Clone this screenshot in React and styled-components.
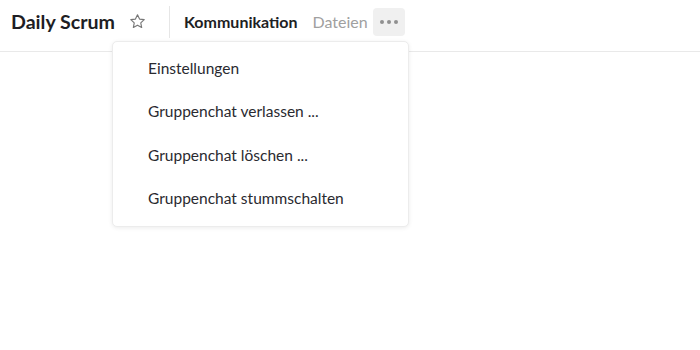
import React from "react";
import styled, { createGlobalStyle } from "styled-components";

const Global = createGlobalStyle`
  html, body { margin: 0; padding: 0; background: #fff; }
  body { font-family: "Lato", "Liberation Sans", sans-serif; }
`;

const Page = styled.div`
  position: relative;
  width: 700px;
  height: 350px;
  background: #fff;
`;

const Header = styled.header`
  display: flex;
  align-items: center;
  height: 43px;
  padding: 0 0 8px 11px;
  border-bottom: 1px solid #e9e9e9;
`;

const Title = styled.h1`
  margin: 0;
  font-size: 19.6px;
  font-weight: 700;
  color: #1e1e24;
`;

const StarButton = styled.span`
  display: flex;
  margin-left: 14px;
  color: #777;
`;

const Divider = styled.span`
  width: 1px;
  height: 32px;
  background: #e6e6e6;
  margin: 0 14px 0 23px;
`;

const Tab = styled.span`
  font-size: 16px;
  font-weight: ${(p) => (p.$active ? 700 : 400)};
  color: ${(p) => (p.$active ? "#1e1e24" : "#a0a0a0")};
  margin-right: 15px;
`;

const MoreButton = styled.span`
  display: flex;
  align-items: center;
  justify-content: center;
  gap: 3px;
  width: 32px;
  height: 28px;
  margin-left: -10px;
  border-radius: 4px;
  background: #f0f0f0;
`;

const Dot = styled.span`
  width: 4px;
  height: 4px;
  border-radius: 50%;
  background: #909090;
`;

const Menu = styled.ul`
  position: absolute;
  left: 112px;
  top: 41px;
  width: 297px;
  margin: 0;
  padding: 4px 0 6px;
  list-style: none;
  background: #fff;
  border-radius: 5px;
  border: 1px solid #ececec;
  box-shadow: 0 1px 4px rgba(0, 0, 0, 0.08);
  box-sizing: border-box;
`;

const MenuItem = styled.li`
  display: flex;
  align-items: center;
  height: 43.5px;
  padding-left: 35px;
  font-size: 15.5px;
  color: #2a2a30;
`;

const Star = () => (
  <svg width="17" height="17" viewBox="0 0 24 24" fill="none" stroke="currentColor" strokeWidth="1.6" strokeLinejoin="round">
    <polygon points="12 2.5 14.9 8.6 21.5 9.4 16.6 13.9 17.9 20.5 12 17.2 6.1 20.5 7.4 13.9 2.5 9.4 9.1 8.6" />
  </svg>
);

export default function App() {
  return (
    <Page>
      <Global />
      <Header>
        <Title>Daily Scrum</Title>
        <StarButton><Star /></StarButton>
        <Divider />
        <Tab $active>Kommunikation</Tab>
        <Tab>Dateien</Tab>
        <MoreButton><Dot /><Dot /><Dot /></MoreButton>
      </Header>
      <Menu>
        <MenuItem>Einstellungen</MenuItem>
        <MenuItem>Gruppenchat verlassen ...</MenuItem>
        <MenuItem>Gruppenchat löschen ...</MenuItem>
        <MenuItem>Gruppenchat stummschalten</MenuItem>
      </Menu>
    </Page>
  );
}
